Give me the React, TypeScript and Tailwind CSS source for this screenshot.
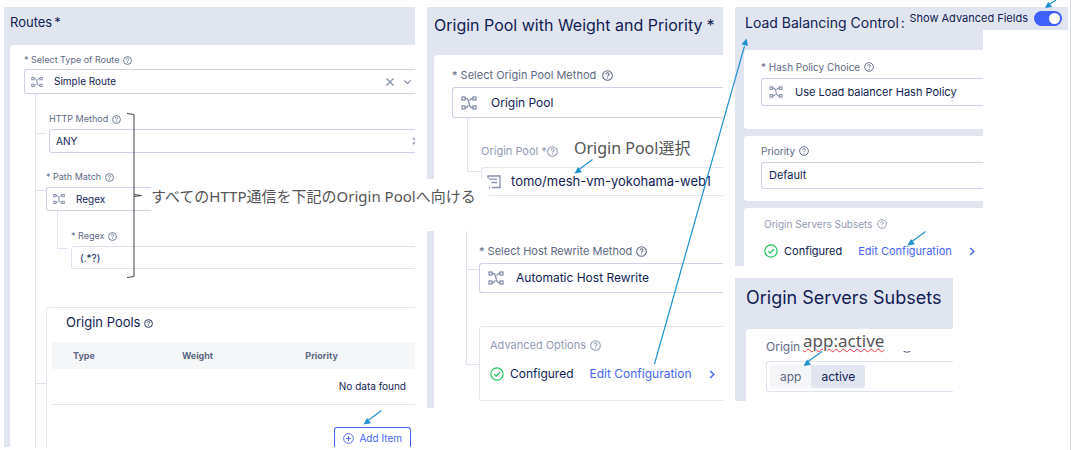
import React from 'react';

type IconProps = { className?: string };

function NodesIcon({ className = 'size-3' }: IconProps) {
  return (
    <svg viewBox="0 0 16 14" fill="none" stroke="currentColor" strokeWidth="1.3" className={`shrink-0 ${className}`} aria-hidden="true">
      <rect x="1" y="1" width="3" height="3" />
      <rect x="12" y="1" width="3" height="3" />
      <rect x="1" y="10" width="3" height="3" />
      <rect x="12" y="10" width="3" height="3" />
      <path d="M4 2.500h1.500C8.500 2.500 7.500 11.500 10.500 11.500H12" />
      <path d="M12 2.500h-1.200c-1 0-1.600 1-2 2.200M4 11.500h1.200c1 0 1.600-1 2-2.200" />
    </svg>
  );
}

function HelpIcon({ className = 'size-[9px]' }: IconProps) {
  return (
    <svg viewBox="0 0 16 16" fill="none" stroke="currentColor" strokeWidth="1.5" className={`shrink-0 ${className}`} aria-hidden="true">
      <circle cx="8" cy="8" r="7" />
      <path d="M5.900 6.200a2.100 2.100 0 1 1 3.200 1.800c-.8.5-1.100.8-1.100 1.500" />
      <path d="M8 10.900v1.500" />
    </svg>
  );
}

function CheckIcon() {
  return (
    <svg viewBox="0 0 16 16" fill="none" stroke="currentColor" strokeWidth="1.4" className="size-3.5 shrink-0 text-[#22c55e]" aria-hidden="true">
      <circle cx="8" cy="8" r="7" />
      <path d="M4.800 8.200l2.300 2.200 4.200-4.400" />
    </svg>
  );
}

function ChevronIcon({ className = '' }: IconProps) {
  return (
    <svg viewBox="0 0 6 10" fill="none" stroke="currentColor" strokeWidth="1.600" className={`shrink-0 ${className}`} aria-hidden="true">
      <path d="M1 1l4 4-4 4" />
    </svg>
  );
}

function DocIcon() {
  return (
    <svg viewBox="0 0 14 14" fill="none" stroke="currentColor" strokeWidth="1.300" className="size-3.5 shrink-0" aria-hidden="true">
      <path d="M1 3V1h12v11.500H5M1 4.200h9M4.500 7.500H10M1 12.500h2" />
    </svg>
  );
}

type LabelProps = { id: string; text: string; className: string; iconClass?: string; gap?: string };

function FieldLabel({ id, text, className, iconClass, gap = 'gap-1' }: LabelProps) {
  return (
    <label htmlFor={id} className={`flex items-center whitespace-nowrap ${gap} ${className}`}>
      {text}
      <HelpIcon className={iconClass} />
    </label>
  );
}

type PickerProps = { id: string; value: string; className: string; icon?: React.ReactNode; children?: React.ReactNode };

function Picker({ id, value, className, icon, children }: PickerProps) {
  return (
    <div className={`flex items-center rounded-l-[3px] border border-r-0 border-[#cdd3e4] bg-white text-[#8791ab] ${className}`}>
      {icon}
      <select id={id} className="min-w-0 flex-1 appearance-none bg-transparent text-[#101c54] outline-none">
        <option>{value}</option>
      </select>
      {children}
    </div>
  );
}

function Configured({ className }: { className: string }) {
  return (
    <div className={`flex items-center whitespace-nowrap text-[#101c54] ${className}`}>
      <CheckIcon />
      <span className="ml-1.5">Configured</span>
      <a href="#edit" className="ml-4 flex items-center gap-[17px] text-[#4765f6]">
        Edit Configuration
        <ChevronIcon className="h-[9px] w-1.5" />
      </a>
    </div>
  );
}

const panel = 'bg-[#e1e5f0] text-[#101c54] overflow-hidden';
const smallLabel = 'mb-1 h-3 text-[9px] text-[#5d6984]';
const trunk = 'border-l border-[#dfe3f0]';
const branch = 'h-px w-2.5 shrink-0 bg-[#dfe3f0]';

function RoutesPanel() {
  return (
    <section className={`${panel} pl-1.5`}>
      <h2 className="flex h-[38px] gap-0.5 pt-1.5 text-[13px] leading-[18px]">
        Routes<span>*</span>
      </h2>
      <div className="rounded-tl-[4px] bg-white pt-[9px] pl-3.5">
        <FieldLabel id="route-type" text="* Select Type of Route" className="mb-[3px] h-3 text-[9px] text-[#5d6984]" />
        <Picker id="route-type" value="Simple Route" className="h-[25px] gap-[11px] pr-[5px] pl-1.5 text-[10px]" icon={<NodesIcon />}>
          <button type="button" aria-label="Clear">
            <svg viewBox="0 0 8 8" className="size-2" stroke="currentColor" strokeWidth="1.300" aria-hidden="true">
              <path d="M.5.5l7 7M7.500.5l-7 7" />
            </svg>
          </button>
          <ChevronIcon className="h-2 w-[5px] rotate-90" />
        </Picker>
        <div className={`ml-[11px] ${trunk}`}>
          <div className="flex">
            <span className={`mt-[39px] ${branch}`} />
            <div className="ml-[3px] min-w-0 flex-1 pt-[19px]">
              <FieldLabel id="http-method" text="HTTP Method" className={smallLabel} />
              <Picker id="http-method" value="ANY" className="h-6 pl-1.5 text-[10px]">
                <ChevronIcon className="-mr-0.5 h-2 w-[5px]" />
              </Picker>
            </div>
          </div>
          <div className="flex">
            <span className={`mt-[37px] ${branch}`} />
            <div className="min-w-0 flex-1 pt-[18px]">
              <FieldLabel id="path-match" text="* Path Match" className={smallLabel} />
              <Picker id="path-match" value="Regex" className="h-6 gap-[11px] pl-1.5 text-[10px]" icon={<NodesIcon />} />
              <div className="ml-[11px] flex">
                <span className="h-[38px] w-[11px] shrink-0 border-b border-l border-[#dfe3f0]" />
                <div className="ml-[3px] min-w-0 flex-1 pt-[19px]">
                  <FieldLabel id="regex" text="* Regex" className={smallLabel} />
                  <input
                    id="regex"
                    defaultValue="(.*?)"
                    className="block h-[23px] w-full rounded-l-[3px] border border-r-0 border-[#dfe3f0] pl-2 text-[10px] text-[#101c54] outline-none"
                  />
                </div>
              </div>
            </div>
          </div>
          <div className="flex pt-[38px]">
            <span className={`mt-[76px] ${branch}`} />
            <div className="min-w-0 flex-1 rounded-tl-[3px] border-t border-l border-[#e4e7f2] pl-[5px]">
              <h3 className="flex h-[34px] items-center gap-1 pb-1 pl-3.5 text-[13px]">
                Origin Pools <HelpIcon />
              </h3>
              <table className="w-full table-fixed text-left">
                <thead className="bg-[#f5f6f8] text-[9px] font-semibold text-[#5d6984]">
                  <tr className="h-[27px]">
                    <th className="w-[30%] pl-[21px]">Type</th>
                    <th className="w-[34%] pl-[21px]">Weight</th>
                    <th className="pl-[21px]">Priority</th>
                  </tr>
                </thead>
                <tbody>
                  <tr className="h-[35px] border-b border-[#e4e7f2]">
                    <td colSpan={3} className="pr-[9px] text-right text-[10px]">No data found</td>
                  </tr>
                </tbody>
              </table>
              <div className="flex justify-end pt-[22px] pr-1">
                <button
                  type="button"
                  className="flex h-5 items-center gap-[5px] rounded-t-[3px] border border-b-0 border-[#4765f6] px-2 pt-0.5 text-[10px] text-[#4765f6]"
                >
                  <svg viewBox="0 0 12 12" className="size-[11px]" fill="none" stroke="currentColor" aria-hidden="true">
                    <circle cx="6" cy="6" r="5.300" />
                    <path d="M6 3.200v5.600M3.200 6h5.600" />
                  </svg>
                  Add Item
                </button>
              </div>
            </div>
          </div>
        </div>
      </div>
    </section>
  );
}

function OriginPoolPanel() {
  return (
    <section className={`${panel} pl-[7px]`}>
      <h2 className="flex h-12 gap-1 pt-2 text-[16px] leading-5 whitespace-nowrap">
        Origin Pool with Weight and Priority<span>*</span>
      </h2>
      <div className="rounded-tl-[4px] bg-white pt-3 pb-[7px] pl-[18px]">
        <FieldLabel id="pool-method" text="* Select Origin Pool Method" gap="gap-1.5" className="mb-1 h-4 text-[11px] text-[#5d6984]" iconClass="size-[11px]" />
        <Picker id="pool-method" value="Origin Pool" className="h-[31px] gap-3.5 pl-2 text-[12px]" icon={<NodesIcon className="h-3.5 w-4" />} />
        <div className="ml-[15px] flex">
          <span className="h-[54px] w-3.5 shrink-0 border-b border-l border-[#dfe3f0]" />
          <div className="min-w-0 flex-1 pt-[25px]">
            <FieldLabel id="pool" text="Origin Pool *" gap="gap-0" className="mb-2 h-4 text-[11px] text-[#929bb1]" iconClass="size-[11px]" />
            <div className="flex h-[29px] items-center gap-2.5 rounded-tl-[3px] border-y border-l border-[#e4e7f2] pl-[5px] text-[#8791ab]">
              <DocIcon />
              <select id="pool" className="min-w-0 flex-1 appearance-none text-[13px] text-[#101c54] outline-none">
                <option>tomo/mesh-vm-yokohama-web1</option>
              </select>
            </div>
          </div>
        </div>
        <div className="mt-[35px] ml-3.5 flex">
          <div className="flex w-3.5 shrink-0 flex-col">
            <span className="h-[39px] border-b border-l border-[#dfe3f0]" />
            <span className="h-[95px] border-b border-l border-[#dfe3f0]" />
          </div>
          <div className="min-w-0 flex-1 -ml-px pt-3">
            <FieldLabel id="rewrite" text="* Select Host Rewrite Method" gap="gap-1" className="mb-1 h-4 text-[11px] text-[#5d6984]" iconClass="size-[11px]" />
            <Picker id="rewrite" value="Automatic Host Rewrite" className="h-[30px] gap-3 pl-2 text-[12px]" icon={<NodesIcon className="h-3.5 w-4" />} />
            <div className="mt-[33px] h-[75px] rounded-l-[3px] border border-r-0 border-[#e4e7f2] pt-2.5 pl-2.5">
              <p className="flex h-4 items-center gap-1 text-[11px] text-[#929bb1]">
                Advanced Options <HelpIcon className="size-[11px]" />
              </p>
              <Configured className="mt-[13px] h-4 text-[12px]" />
            </div>
          </div>
        </div>
      </div>
    </section>
  );
}

function LoadBalancingPanel() {
  return (
    <section className={`${panel} pl-2.5`}>
      <h2 className="flex h-[43px] gap-0.5 pt-1.5 text-[14px] leading-5 whitespace-nowrap">
        Load Balancing Control<span>:</span>
      </h2>
      <div className="-ml-px grid gap-[7px]">
        <div className="rounded-l-[4px] bg-white pt-[9px] pb-[23px] pl-[17px]">
          <FieldLabel id="hash" text="* Hash Policy Choice" gap="gap-1" className="mb-[3px] h-4 text-[10px] text-[#5d6984]" iconClass="size-2.5" />
          <Picker id="hash" value="Use Load balancer Hash Policy" className="h-7 gap-3 pl-[7px] text-[11px]" icon={<NodesIcon className="h-3 w-3.5" />} />
        </div>
        <div className="rounded-l-[4px] bg-white pt-[7px] pb-3 pl-[17px]">
          <FieldLabel id="priority" text="Priority" gap="gap-1" className="mb-[3px] h-4 text-[10px] text-[#5d6984]" iconClass="size-2.5" />
          <Picker id="priority" value="Default" className="h-[27px] pl-[7px] text-[11px]" />
        </div>
        <div className="rounded-tl-[4px] bg-white pt-2 pb-[7px] pl-5">
          <p className="flex h-4 items-center gap-1 text-[10px] text-[#929bb1]">
            Origin Servers Subsets <HelpIcon className="size-2.5" />
          </p>
          <Configured className="mt-[11px] h-4 text-[11px]" />
        </div>
      </div>
    </section>
  );
}

function SubsetsPanel() {
  return (
    <section className={`${panel} mt-3 mr-[30px] pl-[11px]`}>
      <h2 className="h-[51px] pt-2 text-[18px] leading-6 whitespace-nowrap">Origin Servers Subsets</h2>
      <div className="relative rounded-tl-[4px] bg-white pt-2.5 pb-[9px] pl-5">
        <p className="mb-1.5 flex h-4 items-center justify-between pr-10 text-[12px] whitespace-nowrap text-[#5d6984]">
          Origin <HelpIcon className="size-3" />
        </p>
        <div className="flex h-[31px] rounded-l-[3px] border border-r-0 border-[#dfe3f0] p-[3px] text-[12px]">
          <span className="flex items-center rounded-l-[3px] bg-[#f5f6f8] px-2.5 text-[#5d6984]">app</span>
          <span className="flex items-center rounded-r-[3px] bg-[#e1e5f0] px-2.5">active</span>
        </div>
        <p className="absolute top-0.5 left-[57px] flex h-5 w-[110px] items-center bg-white font-['Noto_Sans'] text-[17px] text-[#555]">
          <span className="leading-[18px] underline decoration-[#ef3340] decoration-wavy decoration-1 underline-offset-1">app:active</span>
        </p>
      </div>
    </section>
  );
}

function Annotations() {
  return (
    <>
      <p className="absolute top-[179px] left-[151px] flex h-[52px] w-[338px] items-center bg-white pb-[18px] font-['Noto_Sans','Noto_Sans_CJK_JP',sans-serif] text-[15px] whitespace-nowrap text-[#555]">
        すべてのHTTP通信を下記のOrigin Poolへ向ける
      </p>
      <p className="absolute top-[137px] left-[574px] font-['Noto_Sans','Noto_Sans_CJK_JP',sans-serif] text-[16px] leading-[22px] whitespace-nowrap text-[#555]">
        Origin Pool選択
      </p>
      <svg className="pointer-events-none absolute top-0 left-0 h-[450px] w-[1071px]" viewBox="0 0 1071 450" fill="none" aria-hidden="true">
        <path d="M127 113.500l7 1V276.500l-7 1M134 194.500l7.500 1-7.500 1" stroke="#444" />
        <g stroke="#1f93cf" strokeWidth="1.200">
          <path d="M381.500 410.500L368 420.500M592.500 159.500L579 169.500M654.500 364L744.500 46M925.500 231.500L912 241.500M1056 0L1049 4.500M822 351.500L808 361.500" />
        </g>
        <g fill="#1f93cf">
          <path d="M363.500 424.500l3.500-6.500 4 5.200zM574.500 173.500l3.500-6.500 4 5.200zM746.500 38.500l1.500 7.500-6.500-1.800zM907.500 245.500l3.500-6.500 4 5.200zM1045 8l3.200-6.200 4 5.200zM803.500 366l3.500-6.500 4 5.200z" />
        </g>
      </svg>
    </>
  );
}

export default function App() {
  return (
    <main className="relative border-r border-[#d9dbe0] bg-white pt-[7px] pr-0.5 pb-[3px] pl-1 font-['Inter','Noto_Sans_CJK_JP',sans-serif]">
      <div className="grid grid-cols-[411fr_296fr_333fr] items-start gap-x-3">
        <RoutesPanel />
        <OriginPoolPanel />
        <div className="relative grid grid-cols-[248fr_85fr]">
          <div className="min-w-0">
            <LoadBalancingPanel />
            <SubsetsPanel />
          </div>
          <label className="absolute top-0 right-0 flex h-[23px] items-center gap-1.5 bg-[#e1e5f0] pr-1.5 pl-0.5 text-[11px] whitespace-nowrap text-[#101c54]">
            Show Advanced Fields
            <input
              type="checkbox"
              role="switch"
              defaultChecked
              className="h-[15px] w-7 appearance-none rounded-full bg-[#3f5ffb] before:mt-0.5 before:ml-[15px] before:block before:size-[11px] before:rounded-full before:bg-white"
            />
          </label>
        </div>
      </div>
      <Annotations />
    </main>
  );
}
